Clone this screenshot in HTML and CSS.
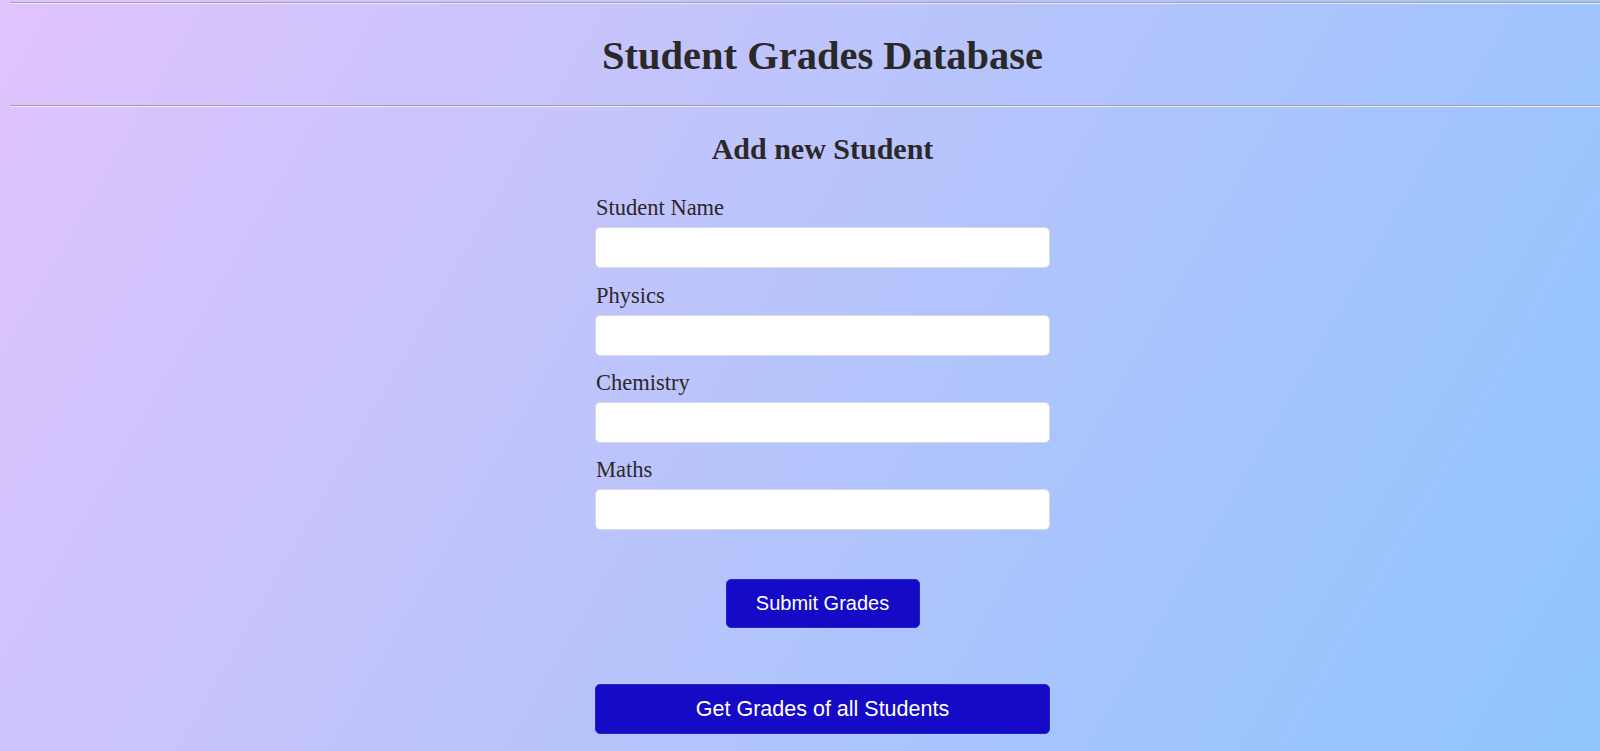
FILE: index.html
```html
<!DOCTYPE html>
<html lang="en">
<head>
<meta charset="utf-8">
<title>Student Grades Database</title>
<link rel="stylesheet" href="styles.css">
</head>
<body>
<div class="page">
  <div class="rule rule-top"></div>
  <h1 class="title">Student Grades Database</h1>
  <div class="rule rule-bottom"></div>
  <main class="content">
    <h2 class="subtitle">Add new Student</h2>
    <form class="grade-form">
      <label class="field-label" for="name">Student Name</label>
      <input class="field-input" id="name" type="text">
      <label class="field-label" for="physics">Physics</label>
      <input class="field-input" id="physics" type="text">
      <label class="field-label" for="chemistry">Chemistry</label>
      <input class="field-input" id="chemistry" type="text">
      <label class="field-label" for="maths">Maths</label>
      <input class="field-input" id="maths" type="text">
      <button class="btn btn-submit" type="button">Submit Grades</button>
    </form>
    <button class="btn btn-all" type="button">Get Grades of all Students</button>
  </main>
</div>
</body>
</html>
```

FILE: styles.css
```css
html {
  overflow: hidden;
  height: 100%;
  background: linear-gradient(120deg, #e0c3fc 0%, #8ec5fc 100%);
}

body {
  margin: 0;
  min-height: 100%;
  font-family: "Liberation Serif", "Times New Roman", serif;
  color: #2b2828;
}

.page {
  width: 1625px;
  padding: 2px 0 0 10px;
  display: flex;
  flex-direction: column;
}

.rule {
  height: 0;
  border-top: 1px solid #a19cb6;
  border-bottom: 1px solid #ecebf6;
}

.title {
  margin: 28px 0 25px;
  font-size: 40.5px;
  line-height: 48px;
  font-weight: bold;
  text-align: center;
}

.content {
  display: flex;
  flex-direction: column;
  align-items: center;
}

.subtitle {
  margin: 24px 0 0;
  font-size: 30px;
  line-height: 36px;
  font-weight: bold;
  text-align: center;
}

.grade-form {
  width: 455px;
  display: flex;
  flex-direction: column;
  margin-top: 14px;
}

.field-label {
  font-size: 22.5px;
  line-height: 26px;
  margin-top: 14.33px;
  padding-left: 1px;
}

.field-input {
  margin-top: 6px;
  height: 41px;
  box-sizing: border-box;
  border: 1px solid #d9d9e0;
  border-radius: 5px;
  background: #ffffff;
  padding: 0 10px;
  font-size: 18px;
}

.btn {
  background: #150ac5;
  color: #ffffff;
  border: 1px solid #2a20d0;
  border-radius: 5px;
  font-family: "Liberation Sans", Arial, sans-serif;
  cursor: pointer;
}

.btn-submit {
  align-self: center;
  margin-top: 49px;
  width: 194px;
  height: 49px;
  font-size: 20px;
}

.btn-all {
  margin-top: 56px;
  width: 455px;
  height: 50px;
  font-size: 21.5px;
}
```
